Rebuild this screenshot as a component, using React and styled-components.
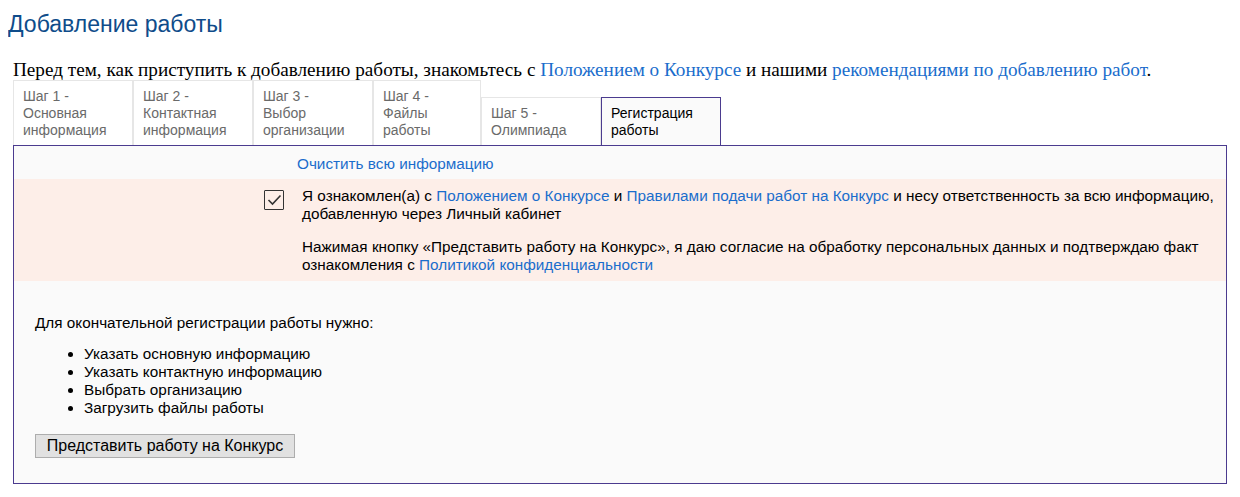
import React from 'react';
import styled, { createGlobalStyle } from 'styled-components';

const GlobalStyle = createGlobalStyle`
  body {
    margin: 8px;
    font-family: "Liberation Sans", Arial, sans-serif;
    font-size: 15.3px;
    color: #000;
    background: #fff;
  }
`;

const Page = styled.div`
  padding: 0 5px;
`;

const Title = styled.h1`
  margin: 3px -5px 0;
  font-size: 23px;
  line-height: 26px;
  font-weight: normal;
  color: #0f4c8a;
`;

const Intro = styled.p`
  margin: 22px 0 0;
  font-family: "Liberation Serif", "Times New Roman", serif;
  font-size: 19.2px;
  line-height: 21px;
`;

const Link = styled.a`
  color: #1a6dcc;
  text-decoration: none;
  cursor: pointer;
`;

const Tabs = styled.div`
  display: flex;
  align-items: flex-end;
`;

const Tab = styled.div`
  box-sizing: border-box;
  width: ${(p) => p.$w}px;
  padding: 7px 9px 6px;
  font-size: 14px;
  line-height: 17px;
  border: 1px solid ${(p) => (p.$active ? '#4b3b8f' : '#e6e6e6')};
  border-bottom: none;
  background: ${(p) => (p.$active ? '#fafafa' : '#fff')};
  color: ${(p) => (p.$active ? '#000' : '#6a6a6a')};
  cursor: pointer;
`;

const Panel = styled.div`
  border: 1px solid #4b3b8f;
  background: #fafafa;
  padding-bottom: 25px;
`;

const ClearRow = styled.div`
  padding: 9px 0 6px 283px;
  line-height: 18px;
`;

const Consent = styled.div`
  display: flex;
  gap: 18px;
  padding: 8px 10px 7px 250px;
  background: #fdeee8;
`;

const CheckBox = styled.span`
  flex: none;
  box-sizing: border-box;
  width: 20px;
  height: 20px;
  margin-top: 3px;
  border: 1.5px solid #333;
  border-radius: 1px;
  display: flex;
  align-items: center;
  justify-content: center;
`;

const ConsentText = styled.div`
  line-height: 18px;

  p {
    margin: 0;
  }

  p + p {
    margin-top: 15px;
  }
`;

const Requirements = styled.div`
  padding: 33px 0 0 21px;
  line-height: 18px;
`;

const List = styled.ul`
  margin: 13px 0 0;
  padding-left: 49px;
  line-height: 18px;
`;

const SubmitButton = styled.button`
  margin-top: 17px;
  width: 260px;
  height: 24px;
  padding: 0;
  font-family: "Liberation Sans", Arial, sans-serif;
  font-size: 16px;
  color: #000;
  background: #e1e1e1;
  border: 1px solid #adadad;
  border-radius: 0;
  cursor: pointer;
`;

const tabs = [
  { w: 120, lines: ['Шаг 1 -', 'Основная', 'информация'] },
  { w: 120, lines: ['Шаг 2 -', 'Контактная', 'информация'] },
  { w: 120, lines: ['Шаг 3 -', 'Выбор', 'организации'] },
  { w: 108, lines: ['Шаг 4 -', 'Файлы', 'работы'] },
  { w: 120, lines: ['Шаг 5 -', 'Олимпиада'] },
  { w: 120, lines: ['Регистрация', 'работы'], active: true },
];

const App = () => (
  <Page>
    <GlobalStyle />
    <Title>Добавление работы</Title>
    <Intro>
      Перед тем, как приступить к добавлению работы, знакомьтесь с{' '}
      <Link>Положением о Конкурсе</Link> и нашими{' '}
      <Link>рекомендациями по добавлению работ</Link>.
    </Intro>
    <Tabs>
      {tabs.map((t, i) => (
        <Tab key={i} $w={t.w} $active={t.active}>
          {t.lines.map((l, j) => (
            <div key={j}>{l}</div>
          ))}
        </Tab>
      ))}
    </Tabs>
    <Panel>
      <ClearRow>
        <Link>Очистить всю информацию</Link>
      </ClearRow>
      <Consent>
        <CheckBox>
          <svg width="15" height="12" viewBox="0 0 15 12">
            <path d="M1.5 6 L5.5 10 L13.5 1.5" fill="none" stroke="#333" strokeWidth="1.6" />
          </svg>
        </CheckBox>
        <ConsentText>
          <p>
            Я ознакомлен(а) с <Link>Положением о Конкурсе</Link> и{' '}
            <Link>Правилами подачи работ на Конкурс</Link> и несу ответственность за всю информацию,
            добавленную через Личный кабинет
          </p>
          <p>
            Нажимая кнопку «Представить работу на Конкурс», я даю согласие на обработку персональных данных и подтверждаю факт
            ознакомления с <Link>Политикой конфиденциальности</Link>
          </p>
        </ConsentText>
      </Consent>
      <Requirements>
        Для окончательной регистрации работы нужно:
        <List>
          <li>Указать основную информацию</li>
          <li>Указать контактную информацию</li>
          <li>Выбрать организацию</li>
          <li>Загрузить файлы работы</li>
        </List>
        <SubmitButton>Представить работу на Конкурс</SubmitButton>
      </Requirements>
    </Panel>
  </Page>
);

export default App;
